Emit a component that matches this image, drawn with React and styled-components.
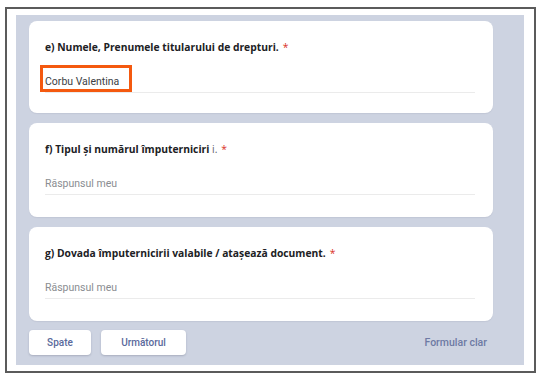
import React from "react";
import styled, { createGlobalStyle } from "styled-components";

const Global = createGlobalStyle`
  html, body { margin: 0; padding: 0; background: #ffffff; }
  body { font-family: "Roboto", "Liberation Sans", sans-serif; }
`;

const Frame = styled.div`
  box-sizing: border-box;
  margin: 7px 0 0 5px;
  width: 531px;
  height: 366px;
  border: 2px solid #5b5b5b;
  padding: 6px 10px 6px 9px;
  background: #fff;
`;

const Panel = styled.div`
  box-sizing: border-box;
  height: 100%;
  background: #cdd3e1;
  padding: 6px 31px 0 13px;
  display: flex;
  flex-direction: column;
  gap: 10px;
`;

const Card = styled.div`
  box-sizing: border-box;
  background: #fff;
  border-radius: 8px;
  padding: 20px 18px 21px 16px;
  height: ${(p) => p.$h}px;
  box-shadow: 0 1px 1px rgba(60, 64, 90, 0.08);
`;

const Title = styled.div`
  font-family: "Open Sans", "Roboto", sans-serif;
  font-weight: 700;
  font-size: 10.3px;
  line-height: 12px;
  color: #202124;
  white-space: nowrap;
`;

const Soft = styled.span`
  font-weight: 400;
  color: #5f6368;
`;

const Req = styled.span`
  color: #d93025;
  font-weight: 400;
  margin-left: 4px;
`;

const Field = styled.div`
  position: relative;
  margin-top: 17px;
  height: 22px;
  border-bottom: 1px solid #ebebeb;
  display: flex;
  align-items: center;
  font-family: "Roboto", sans-serif;
  font-size: 10.5px;
  color: ${(p) => (p.$placeholder ? "#8a8d91" : "#3c4043")};
`;

const Highlight = styled.div`
  position: absolute;
  left: -5px;
  top: -5px;
  width: 92px;
  height: 27px;
  box-sizing: border-box;
  border: 3px solid #f4590f;
`;

const Footer = styled.div`
  display: flex;
  align-items: center;
  gap: 10px;
  margin-top: -1px;
  width: 464px;
`;

const Button = styled.button`
  box-sizing: border-box;
  height: 25px;
  width: ${(p) => p.$w}px;
  border: none;
  border-radius: 4px;
  background: #fff;
  box-shadow: 0 1px 2px rgba(60, 64, 90, 0.25);
  font-family: "Roboto", sans-serif;
  font-weight: 500;
  font-size: 10px;
  color: #5a6a9c;
  padding: 0;
`;

const Clear = styled.span`
  margin-left: auto;
  margin-right: 6px;
  font-family: "Roboto", sans-serif;
  font-weight: 500;
  font-size: 10.5px;
  color: #6e7aa4;
`;

export default function App() {
  return (
    <>
      <Global />
      <Frame>
        <Panel>
          <Card $h={92}>
            <Title>
              e) Numele, Prenumele titularului de drepturi.<Req>*</Req>
            </Title>
            <Field>
              Corbu Valentina
              <Highlight />
            </Field>
          </Card>
          <Card $h={94}>
            <Title>
              f) Tipul și numărul împuterniciri <Soft>i.</Soft>
              <Req>*</Req>
            </Title>
            <Field $placeholder>Răspunsul meu</Field>
          </Card>
          <Card $h={94}>
            <Title>
              g) Dovada împuternicirii valabile / atașează document.<Req>*</Req>
            </Title>
            <Field $placeholder>Răspunsul meu</Field>
          </Card>
          <Footer>
            <Button $w={62}>Spate</Button>
            <Button $w={85}>Următorul</Button>
            <Clear>Formular clar</Clear>
          </Footer>
        </Panel>
      </Frame>
    </>
  );
}
